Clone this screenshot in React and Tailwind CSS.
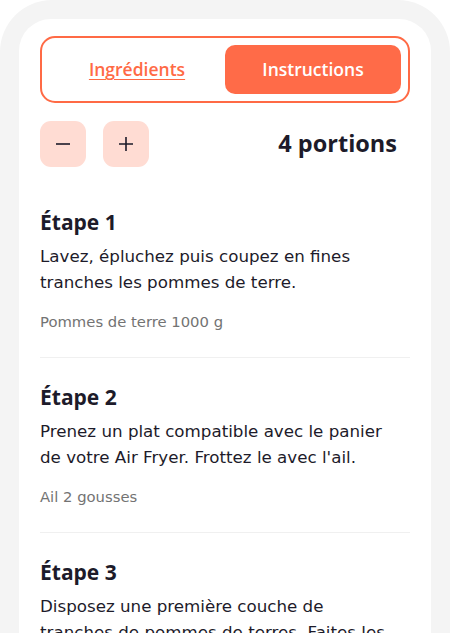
import { useState } from "react";

const steps = [
  {
    title: "Étape 1",
    text: "Lavez, épluchez puis coupez en fines tranches les pommes de terre.",
    ingredient: "Pommes de terre 1000 g",
  },
  {
    title: "Étape 2",
    text: "Prenez un plat compatible avec le panier de votre Air Fryer. Frottez le avec l'ail.",
    ingredient: "Ail 2 gousses",
  },
  {
    title: "Étape 3",
    text: "Disposez une première couche de tranches de pommes de terres. Faites les dorer légèrement.",
    ingredient: "",
  },
];

export default function App() {
  const [tab, setTab] = useState("instructions");
  const [portions, setPortions] = useState(4);

  return (
    <div className="h-[633px] overflow-hidden bg-white">
      <div className="bg-[#f4f4f4] rounded-t-[52px] px-[19px] pt-[19px] h-[700px]">
        <div
          className="bg-white rounded-t-[32px] px-[21px] pt-[17px] h-full"
          style={{ fontFamily: '"DejaVu Sans", sans-serif' }}
        >
          {/* Tabs */}
          <div
            className="flex h-[67px] border-2 border-[#ff6a45] rounded-[15px] p-[7px]"
            style={{ fontFamily: '"Open Sans", sans-serif' }}
          >
            <button
              onClick={() => setTab("ingredients")}
              className="flex-1 flex items-center justify-center text-[17.5px] font-semibold text-[#ff6a45] underline underline-offset-[3px]"
            >
              Ingrédients
            </button>
            <button
              onClick={() => setTab("instructions")}
              className="w-[176px] flex items-center justify-center rounded-[10px] bg-[#ff6b48] text-white text-[17.5px] font-semibold"
            >
              Instructions
            </button>
          </div>

          {/* Portions */}
          <div className="flex items-center mt-[18px]">
            <button
              onClick={() => setPortions(Math.max(1, portions - 1))}
              className="w-[46px] h-[46px] rounded-[11px] bg-[#ffdcd3] flex items-center justify-center text-[#1d1b2a]"
            >
              <svg width="16" height="16" viewBox="0 0 16 16">
                <path d="M1 8h14" stroke="currentColor" strokeWidth="1.6" />
              </svg>
            </button>
            <button
              onClick={() => setPortions(portions + 1)}
              className="w-[46px] h-[46px] rounded-[11px] bg-[#ffdcd3] flex items-center justify-center ml-[17px] text-[#1d1b2a]"
            >
              <svg width="16" height="16" viewBox="0 0 16 16">
                <path d="M1 8h14M8 1v14" stroke="currentColor" strokeWidth="1.6" />
              </svg>
            </button>
            <div
              className="ml-auto pr-[13px] text-[23.5px] font-bold text-[#1d1b2a]"
              style={{ fontFamily: '"Open Sans", sans-serif' }}
            >
              {portions} portions
            </div>
          </div>

          {/* Steps */}
          <div className="mt-[41px]">
            {steps.map((s, i) => (
              <div key={s.title} className={i > 0 ? "pt-[25px] border-t border-[#f0f0f0]" : ""}>
                <h3
                  className="text-[21px] font-bold text-[#1d1b2a] leading-[28px]"
                  style={{ fontFamily: '"Open Sans", sans-serif' }}
                >
                  {s.title}
                </h3>
                <p className="mt-[7px] pr-[14px] text-[16.7px] leading-[26px] text-[#1d1b2a]">
                  {s.text}
                </p>
                {s.ingredient && (
                  <p className="mt-[17px] mb-[25px] text-[14.8px] text-[#737373] leading-[20px]">
                    {s.ingredient}
                  </p>
                )}
              </div>
            ))}
          </div>
        </div>
      </div>
    </div>
  );
}
